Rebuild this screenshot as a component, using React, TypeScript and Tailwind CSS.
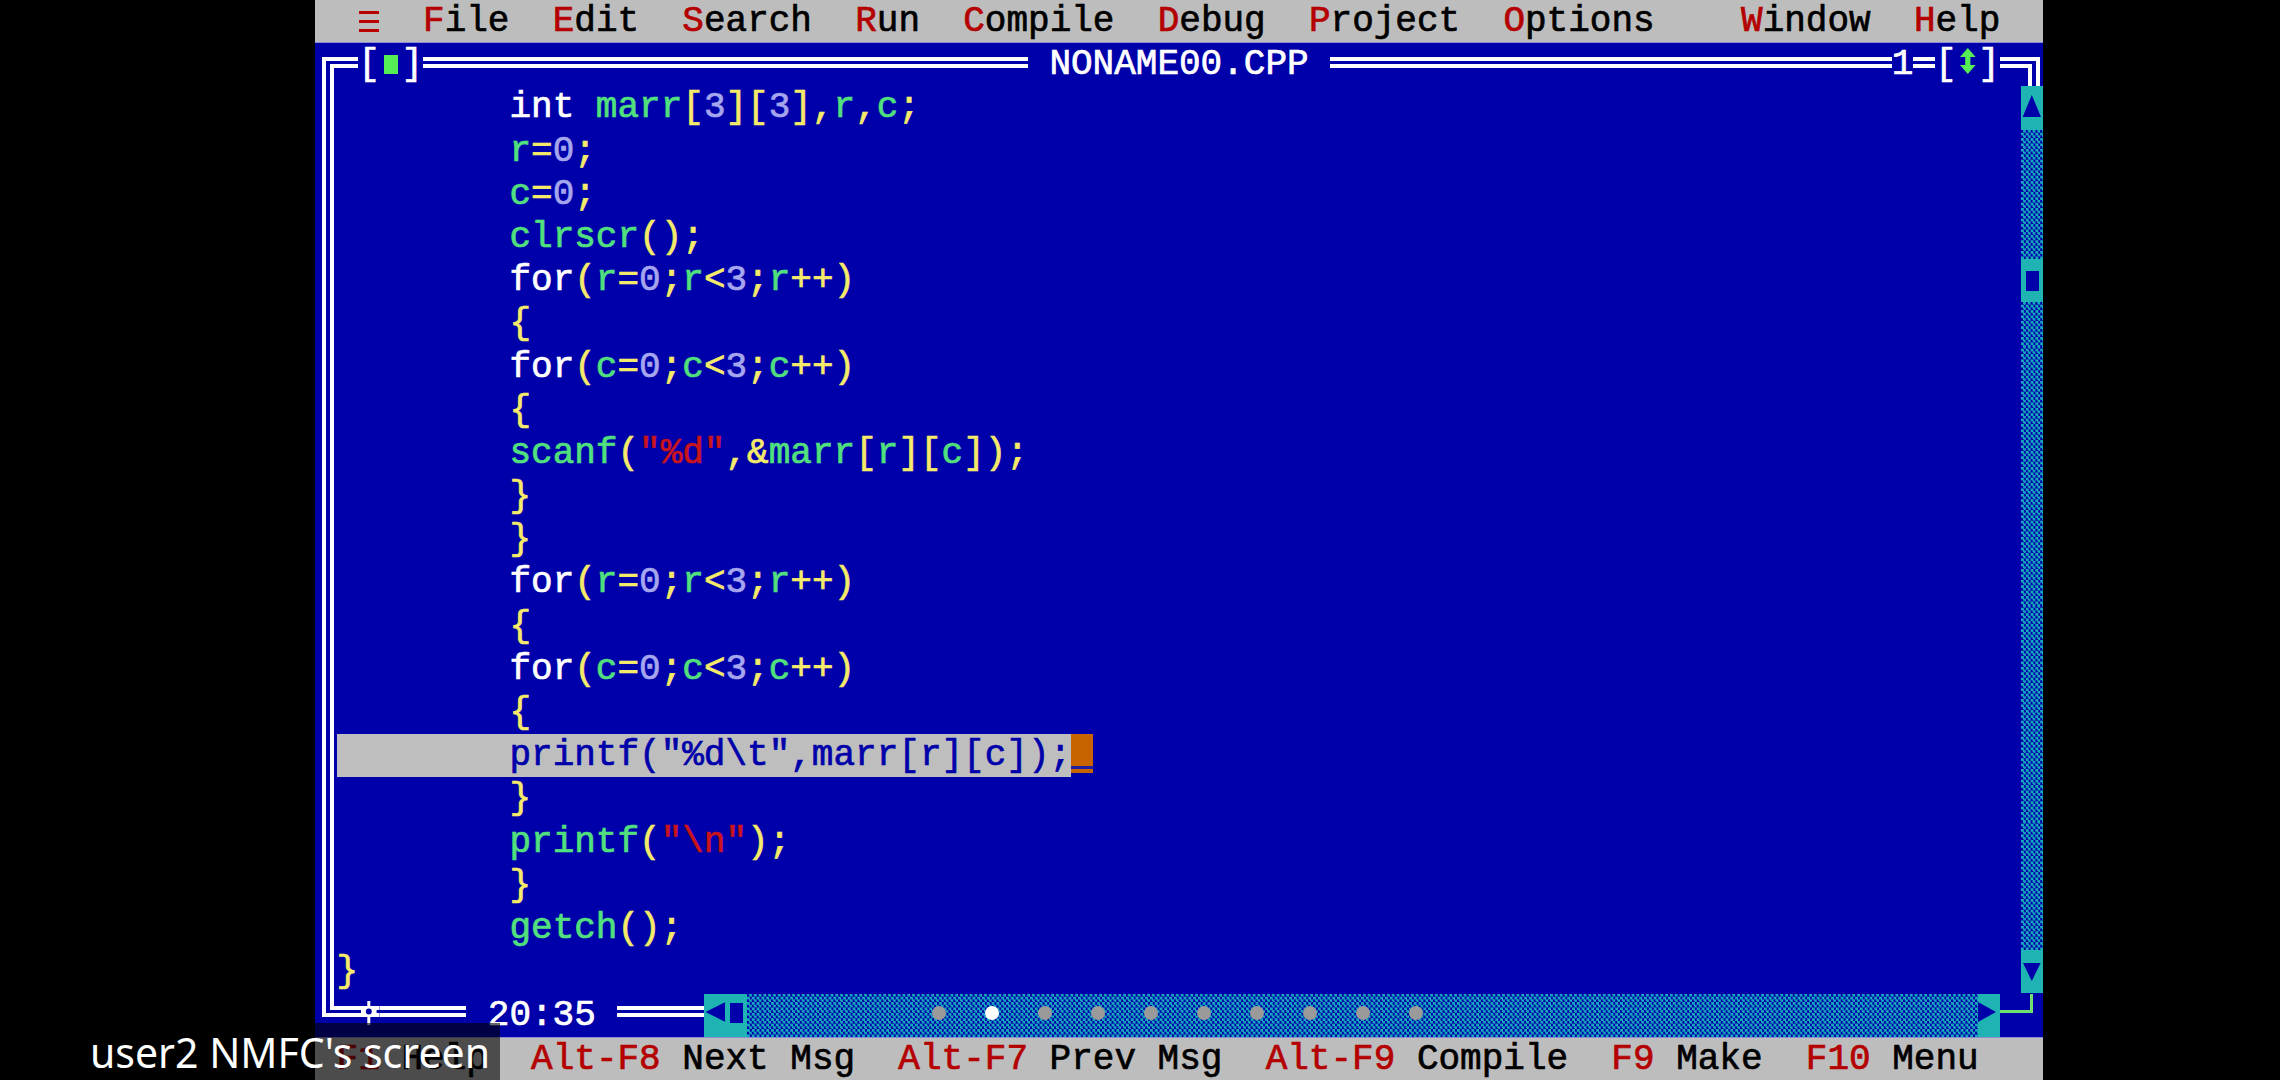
import React from 'react';

type Tok = [string, string];

const Y = 'text-[#f6ea6a]';
const G = 'text-[#52e07e]';
const W = 'text-white';
const L = 'text-[#a6a6ee]';
const R = 'text-[#c8141c]';

const IND: Tok = ['        ', W];

const forLoop = (v: string): Tok[] => [
  IND, ['for', W], ['(', Y], [v, G], ['=', Y], ['0', L], [';', Y], [v, G], ['<', Y], ['3', L], [';', Y], [v, G], ['++)', Y],
];
const open: Tok[] = [IND, ['{', Y]];
const close: Tok[] = [IND, ['}', Y]];

const lines: (Tok[] | 'cursor')[] = [
  [IND, ['int', W], [' ', W], ['marr', G], ['[', Y], ['3', L], ['][', Y], ['3', L], ['],', Y], ['r', G], [',', Y], ['c', G], [';', Y]],
  [IND, ['r', G], ['=', Y], ['0', L], [';', Y]],
  [IND, ['c', G], ['=', Y], ['0', L], [';', Y]],
  [IND, ['clrscr', G], ['();', Y]],
  forLoop('r'),
  open,
  forLoop('c'),
  open,
  [IND, ['scanf', G], ['(', Y], ['"%d"', R], [',&', Y], ['marr', G], ['[', Y], ['r', G], ['][', Y], ['c', G], [']);', Y]],
  close,
  close,
  forLoop('r'),
  open,
  forLoop('c'),
  open,
  'cursor',
  close,
  [IND, ['printf', G], ['(', Y], ['"\\n"', R], [');', Y]],
  close,
  [IND, ['getch', G], ['();', Y]],
  [['}', Y]],
];

const menu: [string, string][] = [
  ['F', 'ile'], ['E', 'dit'], ['S', 'earch'], ['R', 'un'], ['C', 'ompile'], ['D', 'ebug'], ['P', 'roject'], ['O', 'ptions'],
];

const keys: [string, string][] = [
  ['F1', 'Help'], ['Alt-F8', 'Next Msg'], ['Alt-F7', 'Prev Msg'], ['Alt-F9', 'Compile'], ['F9', 'Make'], ['F10', 'Menu'],
];

// double horizontal line, fills a given width
function HLine({ w, low }: { w: string; low?: boolean }) {
  return (
    <div className={`${w} h-[43.2px] flex flex-col ${low ? 'pt-[12px]' : 'pt-[14px]'}`}>
      <div className="h-[4px] bg-white" />
      <div className="mt-[3px] h-[4px] bg-white" />
    </div>
  );
}

function Cell({ children, className = '' }: { children?: React.ReactNode; className?: string }) {
  return <div className={`w-[21.6px] h-[43.2px] shrink-0 ${className}`}>{children}</div>;
}

const pattern =
  'bg-[repeating-conic-gradient(#16a8bc_0_25%,#0000aa_0_50%)] bg-[length:4.8px_5.4px]';

function ScrollV() {
  const rows = Array.from({ length: 21 });
  return (
    <div className="w-[21.6px] flex flex-col">
      {rows.map((_, i) => {
        if (i === 0)
          return (
            <Cell key={i} className="bg-[#1fb3b3]">
              <svg width="21.6" height="43.2" viewBox="0 0 21.6 43.2">
                <polygon points="10.8,9 20,31 1.6,31" fill="#0000aa" />
              </svg>
            </Cell>
          );
        if (i === 20)
          return (
            <Cell key={i} className="bg-[#1fb3b3]">
              <svg width="21.6" height="43.2" viewBox="0 0 21.6 43.2">
                <polygon points="2,13 19.6,13 10.8,31" fill="#0000aa" />
              </svg>
            </Cell>
          );
        if (i === 4)
          return (
            <Cell key={i} className="bg-[#1fb3b3] flex items-center justify-center">
              <div className="w-[13px] h-[20px] bg-[#0000aa]" />
            </Cell>
          );
        return <Cell key={i} className={pattern} />;
      })}
    </div>
  );
}

export default function App() {
  return (
    <div className="relative w-[2280px] h-[1080px] bg-black flex overflow-hidden font-['Liberation_Mono','DejaVu_Sans_Mono',monospace] text-[36px] leading-[43.2px] whitespace-pre [-webkit-text-stroke:0.7px_currentcolor]">
      <div className="w-[315px] shrink-0" />
      <div className="w-[1728px] h-[1080px] shrink-0 flex flex-col bg-[#0000aa]">
        {/* menu bar */}
        <div className="h-[43.2px] flex bg-[#bdbdbd] text-black border-b border-[#8d8dd6]">
          <span>{'  '}</span>
          <Cell className="flex flex-col pt-[11px] gap-[6px] px-[1px]">
            <div className="h-[3px] bg-[#b80000]" />
            <div className="h-[3px] bg-[#b80000]" />
            <div className="h-[3px] bg-[#b80000]" />
          </Cell>
          {menu.map(([h, rest]) => (
            <span key={h}>
              {'  '}
              <span className="text-[#b40000]">{h}</span>
              {rest}
            </span>
          ))}
          <span>{'    '}</span>
          <span>
            <span className="text-[#b40000]">W</span>indow{'  '}
            <span className="text-[#b40000]">H</span>elp
          </span>
        </div>

        {/* editor window */}
        <div className="h-[993.6px] flex flex-col text-white">
          {/* top border */}
          <div className="h-[43.2px] flex">
            <Cell className="pl-[7px] pt-[14px]">
              <div className="h-full border-l-4 border-t-4 border-white pl-[4px] pt-[3px]">
                <div className="h-full border-l-4 border-t-4 border-white" />
              </div>
            </Cell>
            <HLine w="w-[21.6px]" />
            <span>[</span>
            <Cell className="flex items-center justify-center">
              <div className="w-[14px] h-[19px] bg-[#55ee55]" />
            </Cell>
            <span>]</span>
            <HLine w="w-[604.8px]" />
            <span> NONAME00.CPP </span>
            <HLine w="w-[561.6px]" />
            <span>1</span>
            <HLine w="w-[21.6px]" />
            <span>[</span>
            <Cell>
              <svg width="21.6" height="43.2" viewBox="0 0 21.6 43.2">
                <polygon points="10.8,5 18.6,14 3,14" fill="#55ee55" />
                <rect x="8.2" y="13" width="5.2" height="10" fill="#55ee55" />
                <polygon points="3,22 18.6,22 10.8,31" fill="#55ee55" />
              </svg>
            </Cell>
            <span>]</span>
            <HLine w="w-[21.6px]" />
            <Cell className="pt-[14px] pr-[2.6px]">
              <div className="h-full border-r-4 border-t-4 border-white pr-[4px] pt-[3px]">
                <div className="h-full border-r-4 border-t-4 border-white" />
              </div>
            </Cell>
          </div>

          {/* body */}
          <div className="h-[907.2px] flex">
            <div className="w-[21.6px] flex">
              <div className="ml-[7px] w-[4px] bg-white" />
              <div className="ml-[4px] w-[4px] bg-white" />
            </div>
            <div className="w-[1684.8px] flex flex-col">
              {lines.map((ln, i) =>
                ln === 'cursor' ? (
                  <div key={i} className="h-[43.2px] flex">
                    <div className="w-[734.4px] bg-[#bebebe] text-[#0000aa]">
                      {'        printf("%d\\t",marr[r][c]);'}
                    </div>
                    <div className="w-[21.6px] h-[43.2px] flex flex-col">
                      <div className="h-[32px] bg-[#c86400]" />
                      <div className="h-[3px] bg-[#2020a0]" />
                      <div className="h-[4px] bg-[#c86400]" />
                    </div>
                  </div>
                ) : (
                  <div key={i} className="h-[43.2px]">
                    {ln.map(([t, c], j) => (
                      <span key={j} className={c}>
                        {t}
                      </span>
                    ))}
                  </div>
                )
              )}
            </div>
            <ScrollV />
          </div>

          {/* bottom border */}
          <div className="h-[43.2px] flex">
            <Cell className="pl-[7px] pb-[20.2px]">
              <div className="h-full border-l-4 border-b-4 border-white pl-[4px] pb-[3px]">
                <div className="h-full border-l-4 border-b-4 border-white" />
              </div>
            </Cell>
            <HLine w="w-[21.6px]" low />
            <Cell>
              <svg width="21.6" height="43.2" viewBox="0 0 21.6 43.2">
                <rect x="0" y="12" width="21.6" height="4" fill="#fff" />
                <rect x="0" y="19" width="21.6" height="4" fill="#fff" />
                <rect x="9.3" y="7" width="3" height="24" fill="#fff" />
                <rect x="3" y="16" width="15.6" height="3" fill="#fff" />
                <circle cx="10.8" cy="17.5" r="4.2" fill="#0000aa" stroke="#fff" strokeWidth="2.4" />
              </svg>
            </Cell>
            <HLine w="w-[86.4px]" low />
            <span> 20:35 </span>
            <HLine w="w-[86.4px]" low />
            <Cell className="bg-[#1fb3b3]">
              <svg width="21.6" height="43.2" viewBox="0 0 21.6 43.2">
                <polygon points="1.5,18 21.6,8 21.6,28" fill="#0000aa" />
              </svg>
            </Cell>
            <Cell className="bg-[#1fb3b3] flex items-center justify-center">
              <div className="w-[13px] h-[20px] bg-[#0000aa] -mt-[4px]" />
            </Cell>
            <div className={`w-[1231.2px] h-[43.2px] flex items-center gap-[39px] pl-[185px] pb-[5px] ${pattern}`}>
              {Array.from({ length: 10 }).map((_, i) => (
                <div
                  key={i}
                  className={`w-[14px] h-[14px] rounded-full ${i === 1 ? 'bg-white' : 'bg-[#9a9a9a]'}`}
                />
              ))}
            </div>
            <Cell className="bg-[#1fb3b3]">
              <svg width="21.6" height="43.2" viewBox="0 0 21.6 43.2">
                <polygon points="0,8 18,18 0,28" fill="#0000aa" />
              </svg>
            </Cell>
            <Cell className="pt-[16.4px]">
              <div className="h-[3px] bg-[#6fe06f]" />
            </Cell>
            <Cell className="pr-[9.6px] pb-[23.8px]">
              <div className="h-full border-r-[3px] border-b-[3px] border-[#6fe06f]" />
            </Cell>
          </div>
        </div>

        {/* status bar */}
        <div className="h-[43.2px] flex bg-[#bdbdbd] text-black border-t border-[#8d8dd6]">
          <span> </span>
          {keys.map(([k, label], i) => (
            <span key={k}>
              {i > 0 ? '  ' : ''}
              <span className="text-[#b40000]">{k}</span> {label}
            </span>
          ))}
        </div>
      </div>

      {/* screen share label */}
      <div className="absolute left-0 bottom-0 w-[500px] h-[57px] bg-black/60 flex items-center pl-[90px] pt-[2px] font-['Noto_Sans',sans-serif] text-[41px] leading-none text-white tracking-[0px] [-webkit-text-stroke:0px]">
        user2 NMFC's screen
      </div>
    </div>
  );
}
